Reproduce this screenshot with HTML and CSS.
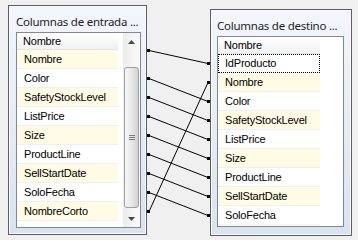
FILE: index.html
```html
<!DOCTYPE html>
<html lang="es">
<head>
    <meta charset="UTF-8">
    <title>Asignaciones de columnas</title>
    <link rel="stylesheet" href="styles.css">
</head>
<body>
    <div class="panel panel-input">
        <div class="panel-title">Columnas de entrada ...</div>
        <div class="list">
            <div class="list-body">
                <div class="list-head">Nombre</div>
                <div class="row alt">Nombre</div>
                <div class="row">Color</div>
                <div class="row alt">SafetyStockLevel</div>
                <div class="row">ListPrice</div>
                <div class="row alt">Size</div>
                <div class="row">ProductLine</div>
                <div class="row alt">SellStartDate</div>
                <div class="row">SoloFecha</div>
                <div class="row alt">NombreCorto</div>
            </div>
            <div class="scrollbar">
                <div class="sb-btn">
                    <svg width="7" height="4" viewBox="0 0 7 4"><path d="M3.5 0 L7 4 L0 4 Z" fill="#4a4a4a"/></svg>
                </div>
                <div class="sb-track">
                    <div class="sb-thumb">
                        <div class="grip"></div>
                    </div>
                </div>
                <div class="sb-btn">
                    <svg width="7" height="4" viewBox="0 0 7 4"><path d="M0 0 L7 0 L3.5 4 Z" fill="#4a4a4a"/></svg>
                </div>
            </div>
        </div>
    </div>

    <!-- lineas de asignacion -->
    <svg class="links" width="63" height="240" viewBox="0 0 63 240">
        <g stroke="#000" stroke-width="1" fill="none">
            <line x1="2" y1="50.5" x2="61" y2="63.5"/>
            <line x1="2" y1="78.5" x2="61" y2="101.5"/>
            <line x1="2" y1="97.5" x2="61" y2="120.5"/>
            <line x1="2" y1="116.5" x2="61" y2="139.5"/>
            <line x1="2" y1="135.5" x2="61" y2="158.5"/>
            <line x1="2" y1="154.5" x2="61" y2="177.5"/>
            <line x1="2" y1="173.5" x2="61" y2="196.5"/>
            <line x1="2" y1="192.5" x2="61" y2="215.5"/>
            <line x1="2" y1="211.5" x2="61" y2="82.5"/>
        </g>
        <g fill="#000">
            <rect x="0" y="49" width="3" height="3"/>
            <rect x="0" y="77" width="3" height="3"/>
            <rect x="0" y="96" width="3" height="3"/>
            <rect x="0" y="115" width="3" height="3"/>
            <rect x="0" y="134" width="3" height="3"/>
            <rect x="0" y="153" width="3" height="3"/>
            <rect x="0" y="172" width="3" height="3"/>
            <rect x="0" y="191" width="3" height="3"/>
            <rect x="0" y="210" width="3" height="3"/>
            <rect x="60" y="62" width="3" height="3"/>
            <rect x="60" y="81" width="3" height="3"/>
            <rect x="60" y="100" width="3" height="3"/>
            <rect x="60" y="119" width="3" height="3"/>
            <rect x="60" y="138" width="3" height="3"/>
            <rect x="60" y="157" width="3" height="3"/>
            <rect x="60" y="176" width="3" height="3"/>
            <rect x="60" y="195" width="3" height="3"/>
            <rect x="60" y="214" width="3" height="3"/>
        </g>
    </svg>

    <div class="panel panel-output">
        <div class="panel-title">Columnas de destino ...</div>
        <div class="list">
            <div class="list-body">
                <div class="list-head">Nombre</div>
                <div class="row focus">IdProducto</div>
                <div class="row alt">Nombre</div>
                <div class="row">Color</div>
                <div class="row alt">SafetyStockLevel</div>
                <div class="row">ListPrice</div>
                <div class="row alt">Size</div>
                <div class="row">ProductLine</div>
                <div class="row alt">SellStartDate</div>
                <div class="row">SoloFecha</div>
            </div>
        </div>
    </div>
</body>
</html>
```
FILE: styles.css
```css
body {
    margin: 0;
    padding-left: 8px;
    background-color: #f0f0f0;
    display: flex;
    align-items: flex-start;
    font-family: "Liberation Sans", Arial, sans-serif;
}
.panel {
    box-sizing: border-box;
    display: flex;
    flex-direction: column;
    border: 1px solid #5f5f5f;
    box-shadow: inset 0 0 0 1px #f7f9fc;
    background: linear-gradient(#f3f6fb, #d8e3f1);
}
.panel-input { width: 139px; height: 230px; margin-top: 5px; padding: 8px 5px 7px 7px; }
.panel-output { width: 142px; height: 227px; margin-top: 9px; padding: 8px 7px 8px 6px; }
.panel-title {
    height: 16px;
    line-height: 16px;
    margin-bottom: 2px;
    padding-left: 0;
    font-family: "Noto Sans", sans-serif;
    font-size: 11.5px;
    letter-spacing: -0.25px;
    color: #1e1e1e;
    white-space: nowrap;
}
.list {
    flex: 1;
    display: flex;
    border: 1px solid #828790;
    background-color: #fff;
}
.list-body { flex: 1; }
.panel-input .list-body { width: 101px; flex: none; margin-right: 5px; }
.panel-output .list-body { width: 102px; flex: none; }
.list-head {
    height: 16px;
    line-height: 16px;
    padding-left: 6px;
    border-bottom: 1px solid #e3e5e8;
    background: linear-gradient(#ffffff, #f1f2f4);
    font-size: 11px;
    letter-spacing: -0.2px;
    color: #000;
}
.row {
    box-sizing: border-box;
    height: 19px;
    line-height: 18px;
    padding-left: 7px;
    border-bottom: 1px solid #f0f0f0;
    font-size: 11px;
    letter-spacing: -0.2px;
    color: #000;
}
.row.alt { background-color: #fffbe4; }
.row.focus { outline: 1px dotted #000; outline-offset: -1px; }
.links { flex: none; display: block; }
.scrollbar {
    width: 17px;
    display: flex;
    flex-direction: column;
    background: linear-gradient(to right, #ececec, #fafafa);
}
.sb-btn {
    height: 17px;
    display: flex;
    align-items: center;
    justify-content: center;
}
.sb-track { flex: 1; padding-top: 17px; padding-bottom: 2px; }
.sb-thumb {
    box-sizing: border-box;
    width: 15px;
    height: 141px;
    margin-left: 1px;
    border: 1px solid #a0a0a0;
    border-radius: 3px;
    background: linear-gradient(to right, #f7f7f7, #e4e4e4 60%, #d2d2d2);
    display: flex;
    align-items: center;
    justify-content: center;
}
.grip {
    width: 6px;
    height: 5px;
    background: repeating-linear-gradient(#7a7a7a 0 1px, transparent 1px 2px);
}
```
